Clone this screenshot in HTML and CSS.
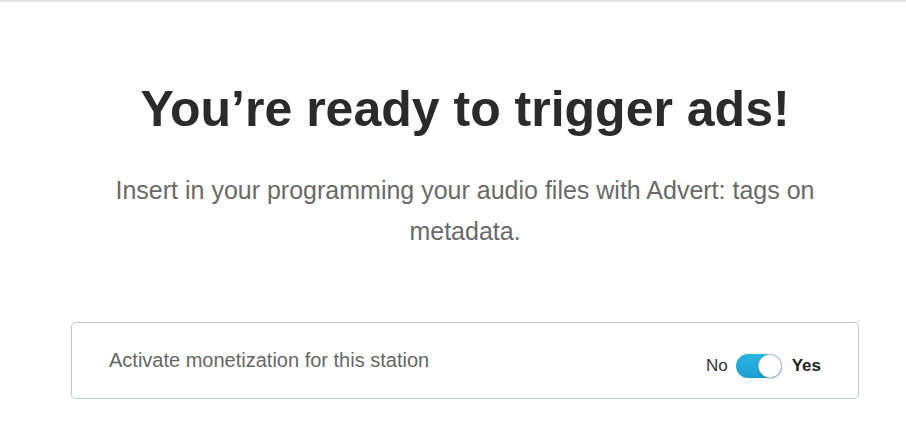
FILE: index.html
```html
<!DOCTYPE html>
<html>
<head>
<meta charset="utf-8"/>
<title>Monetization</title>
<link rel="stylesheet" href="styles.css">
</head>
<body>
  <div class="page">
    <h1 class="title">You’re ready to trigger ads!</h1>
    <p class="lead">Insert in your programming your audio files with Advert: tags on metadata.</p>
    <div class="card">
      <span class="card_label">Activate monetization for this station</span>
      <div class="switch">
        <span class="switch_no">No</span>
        <span class="switch_track"><span class="switch_knob"></span></span>
        <span class="switch_yes">Yes</span>
      </div>
    </div>
  </div>
</body>
</html>
```

FILE: styles.css
```css
*{
  padding:0;
  margin:0;
  box-sizing:border-box;
}
body{
  font-family:"Liberation Sans", Arial, sans-serif;
  background:#fff;
  border-top:2px solid #e2e2e2;
}
.page{
  width:788px;
  margin-left:71px;
  padding-top:78px;
}
.title{
  font-size:50px;
  font-weight:bold;
  color:#2b2b2b;
  text-align:center;
  line-height:58px;
}
.lead{
  width:720px;
  margin:32px auto 0;
  font-size:25px;
  line-height:41px;
  color:#6a6a6a;
  text-align:center;
}
.card{
  margin-top:70px;
  height:77px;
  border:1px solid #c9c2d6;
  border-bottom-color:#bcd0d6;
  border-radius:5px;
  display:flex;
  align-items:center;
  justify-content:space-between;
  padding:0 37px 0 37px;
}
.card_label{
  font-size:20px;
  color:#666;
}
.switch{
  display:flex;
  align-items:center;
  gap:8px;
  font-size:17px;
  color:#333;
  margin-top:10px;
}
.switch_track{
  position:relative;
  width:46px;
  height:24px;
  border-radius:12px;
  background:linear-gradient(#29b4e2, #1b9fd1);
}
.switch_knob{
  position:absolute;
  top:0;
  right:0;
  width:24px;
  height:24px;
  border-radius:50%;
  background:#fff;
  border:1px solid #c8c8c8;
  box-shadow:0 1px 2px rgba(0,0,0,0.2);
}
.switch_yes{
  font-weight:bold;
  color:#222;
  margin-left:2px;
}
```
